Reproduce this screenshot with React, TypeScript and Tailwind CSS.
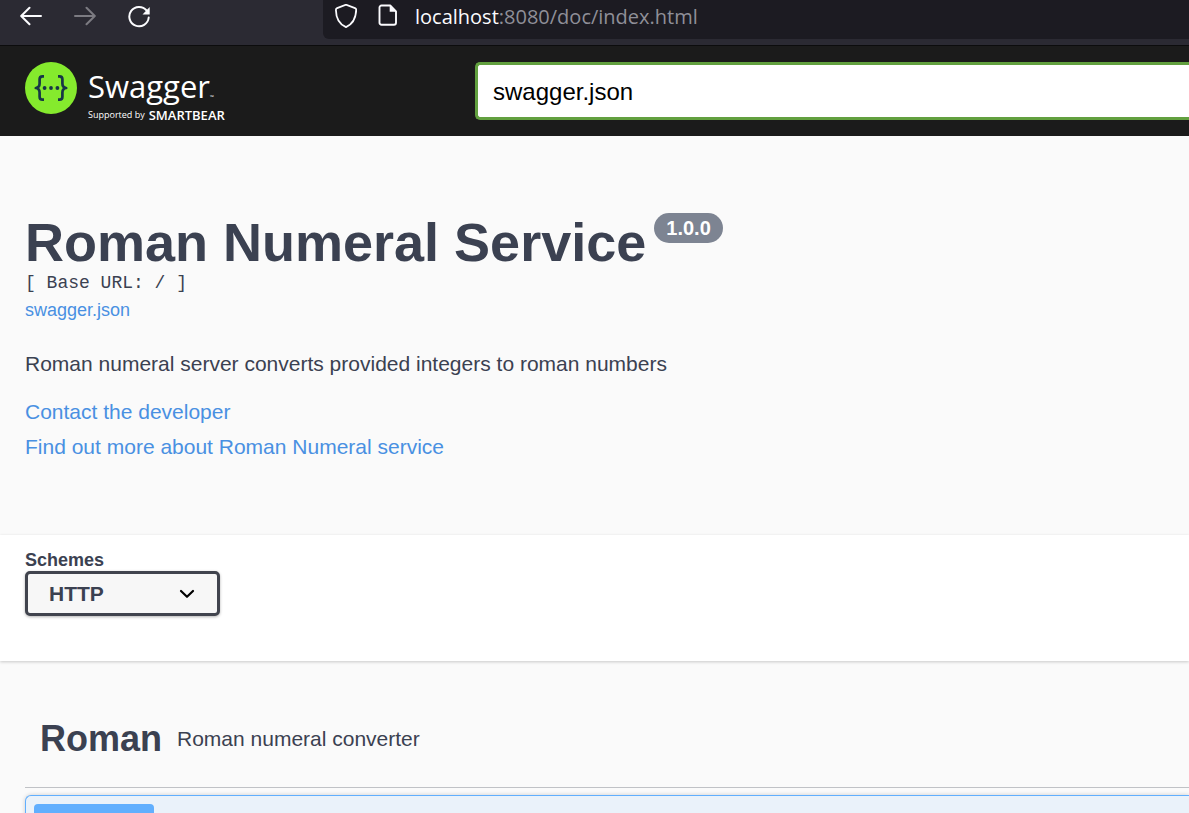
import React from "react";

function BrowserBar() {
  return (
    <nav aria-label="Browser" className="flex h-[46px] items-start border-b border-[#0c0c0d] bg-[#2b2a33] text-[#fbfbfe]">
      <div className="flex h-8 w-[323px] shrink-0 items-center gap-8 pl-5">
        <button type="button" aria-label="Back">
          <svg width="22" height="22" viewBox="0 0 22 22" fill="none" stroke="currentColor" strokeWidth="2" strokeLinecap="round" strokeLinejoin="round">
            <path d="M21 11H1.500M9.500 2.700L1.200 11l8.300 8.300" />
          </svg>
        </button>
        <button type="button" aria-label="Forward" className="text-[#7c7b82]">
          <svg width="22" height="22" viewBox="0 0 22 22" fill="none" stroke="currentColor" strokeWidth="2" strokeLinecap="round" strokeLinejoin="round">
            <path d="M1 11h19.500M12.500 2.700L20.800 11l-8.300 8.300" />
          </svg>
        </button>
        <button type="button" aria-label="Reload">
          <svg width="24" height="24" viewBox="0 0 24 24" fill="none" stroke="currentColor" strokeWidth="2" strokeLinecap="round">
            <path d="M18.600 6.500A9.700 9.700 0 1 0 20.700 13.500" />
            <path d="M21.700 3v7.600h-7.200z" fill="currentColor" stroke="none" />
          </svg>
        </button>
      </div>
      <div className="flex h-[39px] min-w-0 flex-1 items-start rounded-bl-md bg-[#1c1b22] pl-3">
        <div className="flex h-8 items-center">
          <svg width="22" height="25" viewBox="0 0 22 25" fill="none" stroke="currentColor" strokeWidth="1.8" strokeLinejoin="round">
            <path d="M11 .7L20 4.200c1 .4 1.200.7 1.200 1.700C21 13 18 20 11 23.100 4 20 1 13 .9 5.900c0-1 .2-1.300 1.200-1.700z" />
          </svg>
          <svg className="ml-[21px]" width="20" height="24" viewBox="0 0 20 24" fill="none" stroke="currentColor" strokeWidth="1.900" strokeLinejoin="round">
            <path d="M3.500 1.500h8.700l5.800 5.800v11.400a2 2 0 0 1-2 2H3.500a2 2 0 0 1-2-2V3.500a2 2 0 0 1 2-2z" />
            <path d="M11.700 1.500L18 7.800h-6.300z" fill="currentColor" stroke="none" />
          </svg>
          <span className="ml-[17px] pt-[2px] font-['Open_Sans',sans-serif] text-[20px] leading-8 whitespace-nowrap text-[#8f8f98]">
            <span className="text-[#fbfbfe]">localhost</span>:8080/doc/index.html
          </span>
        </div>
      </div>
    </nav>
  );
}

function Logo() {
  return (
    <a href="#" className="flex w-[450px] shrink-0 items-start pt-[2px] font-['Open_Sans',sans-serif] text-white">
      <svg width="52" height="52" viewBox="0 0 52 52" fill="none" aria-hidden="true">
        <circle cx="26" cy="26" r="26" fill="#85ea2d" />
        <g stroke="#173647" strokeWidth="2.700" strokeLinejoin="round">
          <path d="M19 14.300h-1.500c-2 0-2.900 1-2.900 3v4.200c0 2.700-1 4.200-3.800 4.500 2.800.3 3.800 1.800 3.800 4.500v4.200c0 2 .9 3 2.900 3H19" />
          <path d="M33 14.300h1.500c2 0 2.900 1 2.900 3v4.200c0 2.700 1 4.200 3.800 4.500-2.800.3-3.800 1.800-3.800 4.500v4.200c0 2-.9 3-2.900 3H33" />
        </g>
        <g fill="#173647">
          <circle cx="19.600" cy="26" r="1.900" />
          <circle cx="26" cy="26" r="1.900" />
          <circle cx="32.400" cy="26" r="1.900" />
        </g>
      </svg>
      <span className="flex flex-col pt-[3px] pl-[11px]">
        <span className="flex items-end text-[31px] leading-[42px] font-normal">
          Swagger<span className="text-[5px] leading-[20px]">™</span>
        </span>
        <span className="flex h-4 items-center gap-1 text-[9px] leading-3 whitespace-nowrap">
          Supported by <b className="text-[13px] font-semibold">SMARTBEAR</b>
        </span>
      </span>
    </a>
  );
}

function TopBar() {
  return (
    <header className="flex h-[90px] items-center bg-[#1b1b1b] pl-[25px]">
      <Logo />
      <input
        aria-label="Definition URL"
        defaultValue="swagger.json"
        className="h-[58px] min-w-0 flex-1 rounded-l-[5px] border-y-3 border-l-3 border-[#62a03f] bg-white px-[15px] pt-[2px] text-[24px] text-black outline-none"
      />
    </header>
  );
}

function Info() {
  return (
    <section className="px-[25px] pt-[74px] pb-[71px]">
      <h1 className="flex items-start gap-2 text-[54px] leading-[64px] font-bold whitespace-nowrap">
        Roman Numeral Service
        <small className="mt-[3px] rounded-full bg-[#7d8492] px-3 text-[20px] leading-[30px] text-white">1.0.0</small>
      </h1>
      <pre className="font-['Liberation_Mono',monospace] text-[18px] leading-[18px]">[ Base URL: / ]</pre>
      <a href="#" className="block text-[18px] leading-9 text-[#4990e2]">swagger.json</a>
      <p className="mt-5 text-[21px] leading-8">Roman numeral server converts provided integers to roman numbers</p>
      <div className="mt-[14px] flex flex-col items-start text-[21px] leading-[35px] text-[#4990e2]">
        <a href="#">Contact the developer</a>
        <a href="#">Find out more about Roman Numeral service</a>
      </div>
    </section>
  );
}

function Schemes() {
  return (
    <section className="bg-white px-[25px] pt-[14px] pb-[45px] shadow-[0_1px_3px_rgba(0,0,0,0.2)]">
      <label htmlFor="schemes" className="block text-[18px] leading-[22px] font-bold">Schemes</label>
      <div className="grid w-[195px] items-center">
        <select
          id="schemes"
          className="col-start-1 row-start-1 h-[45px] w-full appearance-none rounded-[5px] border-3 border-[#41444e] bg-[#f7f7f7] pl-[21px] text-[21px] font-bold shadow-[0_1px_3px_rgba(0,0,0,0.3)]"
        >
          <option>HTTP</option>
        </select>
        <svg className="pointer-events-none col-start-1 row-start-1 mr-[25px] justify-self-end" width="16" height="10" viewBox="0 0 16 10" fill="none" stroke="#000" strokeWidth="2.200" strokeLinecap="round" strokeLinejoin="round">
          <path d="M2 2l6 5.800L14 2" />
        </svg>
      </div>
    </section>
  );
}

function Operations() {
  return (
    <section className="pt-[46px] pl-[25px]">
      <h2 className="flex h-[81px] items-start border-b border-[#3b4151]/30 pl-[15px] text-[36px] leading-[64px] font-bold">
        Roman
        <small className="pl-[15px] text-[21px] font-normal">Roman numeral converter</small>
      </h2>
      <div className="mt-[7px] rounded-l-md border-y border-l border-[#61affe] bg-[#eaf2fa] p-2 shadow-[0_0_4px_rgba(0,0,0,0.19)]">
        <div className="h-11 w-[120px] rounded-[4px] bg-[#61affe]" />
      </div>
    </section>
  );
}

export default function App() {
  return (
    <div className="h-screen overflow-hidden bg-[#fafafa] font-['Liberation_Sans',Arial,sans-serif] text-[#3b4151]">
      <BrowserBar />
      <TopBar />
      <main>
        <Info />
        <Schemes />
        <Operations />
      </main>
    </div>
  );
}
